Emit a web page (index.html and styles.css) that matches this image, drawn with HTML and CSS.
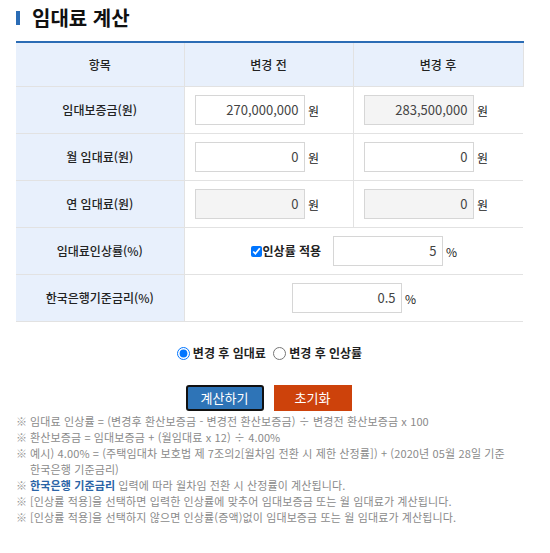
FILE: index.html
```html
<!DOCTYPE html>
<html lang="ko">
<head>
<meta charset="utf-8">
<link rel="stylesheet" href="styles.css">
</head>
<body>
<div class="wrap">
  <h2 class="title"><span class="bar"></span>임대료 계산</h2>
  <table class="calc">
    <colgroup><col class="c1"><col class="c2"><col class="c3"></colgroup>
    <thead>
      <tr class="head"><th>항목</th><th>변경 전</th><th>변경 후</th></tr>
    </thead>
    <tbody>
      <tr>
        <th>임대보증금(원)</th>
        <td><input class="num" value="270,000,000"> <span class="unit">원</span></td>
        <td><input class="num ro" value="283,500,000" readonly> <span class="unit">원</span></td>
      </tr>
      <tr>
        <th>월 임대료(원)</th>
        <td><input class="num" value="0"> <span class="unit">원</span></td>
        <td><input class="num" value="0"> <span class="unit">원</span></td>
      </tr>
      <tr>
        <th>연 임대료(원)</th>
        <td><input class="num ro" value="0" readonly> <span class="unit">원</span></td>
        <td><input class="num ro" value="0" readonly> <span class="unit">원</span></td>
      </tr>
      <tr>
        <th>임대료인상률(%)</th>
        <td colspan="2" class="center">
          <label class="chk"><input type="checkbox" checked>인상률 적용</label>
          <input class="num rate" value="5"> <span class="unit">%</span>
        </td>
      </tr>
      <tr>
        <th>한국은행기준금리(%)</th>
        <td colspan="2" class="center">
          <input class="num" value="0.5"> <span class="unit">%</span>
        </td>
      </tr>
    </tbody>
  </table>

  <div class="radios">
    <label><input type="radio" name="m" checked>변경 후 임대료</label>
    <label><input type="radio" name="m">변경 후 인상률</label>
  </div>

  <div class="buttons">
    <button class="btn calc-btn">계산하기</button>
    <button class="btn reset-btn">초기화</button>
  </div>

  <ul class="notes">
    <li>임대료 인상률 = (변경후 환산보증금 - 변경전 환산보증금) ÷ 변경전 환산보증금 x 100</li>
    <li>환산보증금 = 임대보증금 + (월임대료 x 12) ÷ 4.00%</li>
    <li>예시) 4.00% = (주택임대차 보호법 제 7조의2[월차임 전환 시 제한 산정률]) + (2020년 05월 28일 기준 한국은행 기준금리)</li>
    <li><b class="hl">한국은행 기준금리</b> 입력에 따라 월차임 전환 시 산정률이 계산됩니다.</li>
    <li>[인상률 적용]을 선택하면 입력한 인상률에 맞추어 임대보증금 또는 월 임대료가 계산됩니다.</li>
    <li>[인상률 적용]을 선택하지 않으면 인상률(증액)없이 임대보증금 또는 월 임대료가 계산됩니다.</li>
  </ul>
</div>
</body>
</html>
```

FILE: styles.css
```css
* { box-sizing: border-box; }
body {
  margin: 0;
  background: #fff;
  font-family: "Noto Sans CJK KR", "Noto Sans", sans-serif;
  color: #222;
}
.wrap {
  padding: 0 27px 0 16px;
}
.title {
  display: flex;
  align-items: center;
  margin: 0;
  height: 36px;
  padding-bottom: 1px;
  font-size: 20px;
  font-weight: bold;
  color: #111;
}
.title .bar {
  display: inline-block;
  width: 4px;
  height: 14px;
  background: #2b6cb5;
  margin-right: 12px;
}
.calc {
  width: 507px;
  margin-top: 5px;
  border-collapse: collapse;
  border-top: 2px solid #2b6cb5;
  table-layout: fixed;
  font-size: 12px;
}
.c1 { width: 168px; }
.c2 { width: 169px; }
.c3 { width: 170px; }
.calc th, .calc td {
  border-bottom: 1px solid #e2e2e2;
  border-left: 1px solid #e2e2e2;
  height: 47px;
  padding: 0 0 0 10px;
}
.calc th:first-child { border-left: none; }
.calc tr.head th {
  height: 44px;
  background: #e8f0fc;
  font-weight: 500;
  text-align: center;
  padding: 0;
}
.calc tr.head th:last-child { border-right: 1px solid #e2e2e2; }
.calc tbody th {
  background: #e8f0fc;
  font-weight: 500;
  text-align: center;
  padding: 0;
  color: #222;
}
.calc td.center {
  text-align: center;
  padding: 0;
}
.num {
  width: 110px;
  height: 30px;
  border: 1px solid #d6d6d6;
  background: #fff;
  font-family: "Noto Sans CJK KR", "Noto Sans", sans-serif;
  font-size: 13px;
  color: #444;
  text-align: right;
  padding: 0 5px;
  vertical-align: middle;
}
.num.ro { background: #f4f4f4; }
.unit {
  font-size: 12px;
  color: #222;
  vertical-align: middle;
}
.chk {
  font-weight: bold;
  font-size: 12px;
  vertical-align: middle;
  margin-right: 8px;
}
.chk input {
  margin: 0 1px 0 0;
  width: 11px;
  height: 11px;
  vertical-align: -1px;
}
.radios {
  text-align: center;
  margin-top: 22px;
  font-size: 12px;
  font-weight: bold;
}
.radios label { margin: 0 2px; }
.radios input {
  margin: 0 3px 0 0;
  width: 13px;
  height: 13px;
  vertical-align: -2px;
}
.buttons {
  display: flex;
  justify-content: center;
  gap: 10px;
  margin-top: 24px;
  padding-left: 2px;
  padding-right: 4px;
}
.btn {
  width: 78px;
  height: 26px;
  font-family: "Noto Sans CJK KR", "Noto Sans", sans-serif;
  font-size: 13px;
  color: #fff;
  border: none;
  padding: 0;
}
.calc-btn {
  background: #2e74b7;
  border: 2px solid #111;
  border-radius: 3px;
}
.reset-btn {
  background: #cd420b;
}
.notes {
  list-style: none;
  margin: 2px 0 0;
  padding: 0;
  width: 500px;
  font-size: 11px;
  line-height: 16px;
  letter-spacing: 0.12px;
  color: #8a8a8a;
}
.notes li {
  position: relative;
  padding-left: 14px;
}
.notes li::before {
  content: "※";
  position: absolute;
  left: 0;
  top: 0;
  color: #999;
}
.notes .hl {
  color: #2a64a6;
}
```
